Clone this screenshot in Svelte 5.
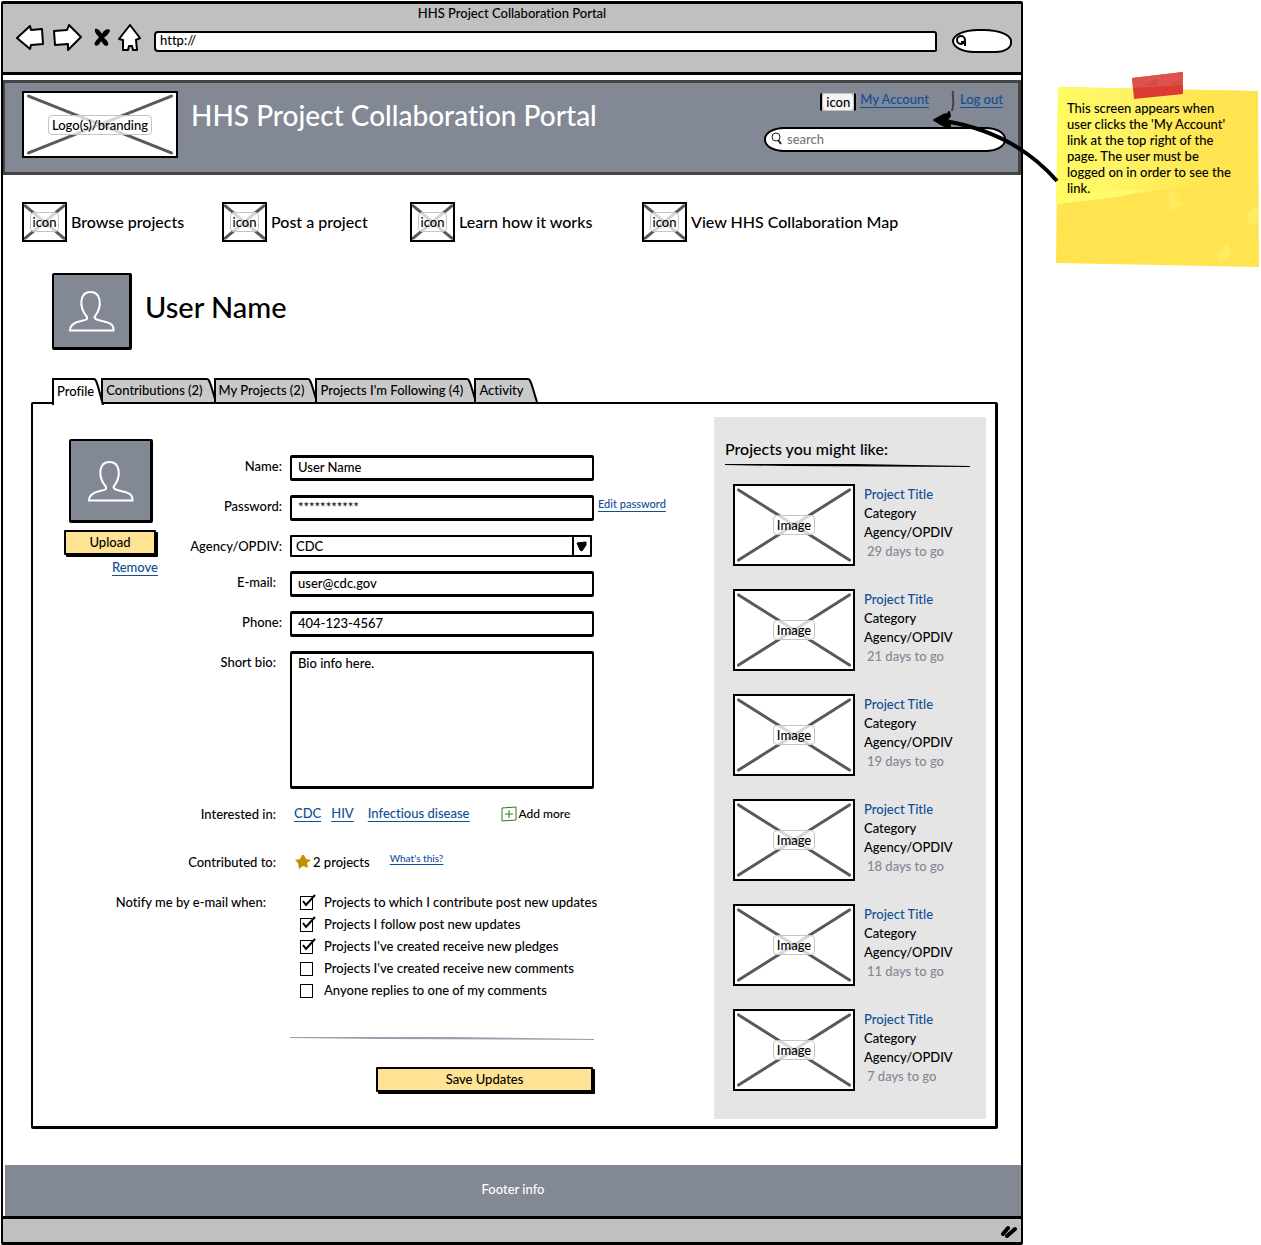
<script>
  const navItems = ['Browse projects', 'Post a project', 'Learn how it works', 'View HHS Collaboration Map'];
  const tabs = ['Profile', 'Contributions (2)', 'My Projects (2)', "Projects I'm Following (4)", 'Activity'];
  const projects = [29, 21, 19, 18, 11, 7];
  let active = $state(0);
  let notices = $state([
    { text: 'Projects to which I contribute post new updates', on: true },
    { text: 'Projects I follow post new updates', on: true },
    { text: "Projects I've created receive new pledges", on: true },
    { text: "Projects I've created receive new comments", on: false },
    { text: 'Anyone replies to one of my comments', on: false }
  ]);
</script>

{#snippet placeholder(label, kind)}
  <span class="placeholder {kind}">
    <svg class="cross" viewBox="0 0 100 100" preserveAspectRatio="none" aria-hidden="true">
      <path d="M3 5 L97 95 M3 95 L97 5" />
    </svg>
    <span class="badge">{label}</span>
  </span>
{/snippet}

{#snippet avatar()}
  <svg class="person" viewBox="0 0 48 42" aria-hidden="true">
    <path d="M19 27 C10 16 12 2 22.500 2 C33 2 35 16 26.500 27 C27 30 30 30 34 31 C41 32.500 46 34 45.500 40.500 L2 40.500 C2 34 8 32 13 31 C17 30 20 30 19 27 Z" />
  </svg>
{/snippet}

<div class="page">
  <div class="window">
    <header class="chrome">
      <div class="window-title">HHS Project Collaboration Portal</div>
      <div class="toolbar">
        <button class="tool" aria-label="Back">
          <svg width="28" height="26" viewBox="0 0 28 26"><path class="outline" d="M1 13 L14 1 L15 5 L26 4 L27 19 L15 20 L14 24 Z" /></svg>
        </button>
        <button class="tool" aria-label="Forward">
          <svg width="30" height="28" viewBox="0 0 30 28"><path class="outline" d="M29 13 L17 1 L15 6 L2 7 L3 21 L16 20 L16 26 Z" /></svg>
        </button>
        <button class="tool stop" aria-label="Stop">
          <svg width="18" height="20" viewBox="0 0 18 20"><path d="M2 1 C5 0 7 3 9 6 C10 3 14 0 17 2 C17 5 13 8 11 10 C14 12 16 15 15 17 C13 20 10 16 8 13 C7 16 4 19 2 17 C0 15 4 12 6 9 C4 7 1 4 2 1 Z" /></svg>
        </button>
        <button class="tool" aria-label="Home">
          <svg width="24" height="28" viewBox="0 0 24 28"><path class="outline" d="M12 1 L22 14 L18 16 L19 26 L15 26 L14 22 L11 22 L10 26 L5 26 L5 16 L1 15 Z" /></svg>
        </button>
        <input class="address" aria-label="Address" value="http://" />
        <div class="mini-search">
          <svg width="14" height="14" viewBox="0 0 14 14" aria-hidden="true"><circle cx="6" cy="6" r="4" /><path d="M6 8 L10 8 L10 12" /></svg>
          <input aria-label="Web search" />
        </div>
      </div>
    </header>

    <div class="banner">
      {@render placeholder('Logo(s)/branding', 'logo')}
      <h1>HHS Project Collaboration Portal</h1>
      <div class="account">
        <div class="account-links">
          <span class="tiny-icon"><span>icon</span></span>
          <a class="mine" href="#account">My Account</a>
          <svg class="rule" width="4" height="20" viewBox="0 0 4 20" aria-hidden="true"><path d="M2 0 C1 8 4 10 1 20" /></svg>
          <a href="#logout">Log out</a>
        </div>
        <div class="search">
          <svg width="12" height="14" viewBox="0 0 12 14" aria-hidden="true"><circle cx="5" cy="5" r="4" /><path d="M7 8 L10 12" stroke-width="2" /></svg>
          <input aria-label="Search" placeholder="search" />
        </div>
      </div>
    </div>

    <nav>
      {#each navItems as item}
        <a href="#nav">{@render placeholder('icon', 'small')}<span>{item}</span></a>
      {/each}
    </nav>

    <section class="user">
      <div class="avatar">{@render avatar()}</div>
      <h2>User Name</h2>
    </section>

    <main>
      <div class="tabs" role="tablist">
        {#each tabs as tab, i}
          <button role="tab" class="tab" class:active={active === i} aria-selected={active === i} onclick={() => (active = i)}>
            <span>{tab}</span>
            <svg width="10" height="27" viewBox="0 0 10 27" preserveAspectRatio="none" aria-hidden="true">
              <path class="fill" d="M0 0 C3 1 4 10 9 27 L0 27 Z" />
              <path class="edge" d="M0 1 C3 1 4 10 9 27" />
            </svg>
          </button>
        {/each}
      </div>

      <div class="panel">
        <div class="profile">
          <div class="photo">
            <div class="avatar big">{@render avatar()}</div>
            <button class="gold">Upload</button>
            <a href="#remove">Remove</a>
          </div>

          <form onsubmit={(e) => e.preventDefault()}>
            <div class="row">
              <label for="name">Name:</label>
              <input id="name" value="User Name" />
            </div>
            <div class="row">
              <label for="password">Password:</label>
              <div class="beside">
                <input id="password" value="***********" />
                <a class="edit" href="#password">Edit password</a>
              </div>
            </div>
            <div class="row">
              <label for="agency">Agency/OPDIV:</label>
              <div class="select">
                <select id="agency"><option>CDC</option></select>
                <svg width="18" height="18" viewBox="0 0 18 18" aria-hidden="true"><path d="M1 0 L1 18" stroke="#000" stroke-width="2" /><path d="M5 6 L14 5 L14 8 L10 14 L8 13 Z" stroke="#000" stroke-linejoin="round" /></svg>
              </div>
            </div>
            <div class="row inset">
              <label for="email">E-mail:</label>
              <input id="email" value="user@cdc.gov" />
            </div>
            <div class="row">
              <label for="phone">Phone:</label>
              <input id="phone" value="404-123-4567" />
            </div>
            <div class="row inset">
              <label for="bio">Short bio:</label>
              <textarea id="bio">Bio info here.</textarea>
            </div>
            <div class="row inset line">
              <span class="label">Interested in:</span>
              <div class="interests">
                <a href="#cdc">CDC</a>
                <a href="#hiv">HIV</a>
                <a class="wide" href="#disease">Infectious disease</a>
                <button class="add" type="button">
                  <svg width="16" height="16" viewBox="0 0 16 16" aria-hidden="true"><path d="M1 2 L15 1 L15 14 L1 15 Z M8 4 L8 12 M4 8 L12 8" /></svg>
                  Add more
                </button>
              </div>
            </div>
            <div class="row inset">
              <span class="label">Contributed to:</span>
              <div class="contributed">
                <svg width="16" height="14" viewBox="0 0 16 14" aria-hidden="true"><path d="M7 0 L9 0 L11 4 L16 5 L12 8 L13 13 L8 11 L4 14 L3 8 L0 5 L5 4 Z" /></svg>
                <span>2 projects</span>
                <a href="#help">What's this?</a>
              </div>
            </div>
            <div class="row notify">
              <span class="label">Notify me by e-mail when:</span>
              <div class="checks">
                {#each notices as notice}
                  <label class="check">
                    <span class="box">
                      <input type="checkbox" bind:checked={notice.on} />
                      <svg width="16" height="16" viewBox="0 0 16 16" aria-hidden="true"><path d="M3 7 L6 11 L15 1" /></svg>
                    </span>
                    {notice.text}
                  </label>
                {/each}
              </div>
            </div>
            <div class="row finish">
              <div class="actions">
                <svg class="divider" viewBox="0 0 304 3" preserveAspectRatio="none" aria-hidden="true"><path d="M0 0 L160 0 L304 2 L304 3 L90 2 L0 1 Z" /></svg>
                <button class="gold">Save Updates</button>
              </div>
            </div>
          </form>
        </div>

        <aside class="suggestions">
          <h3>Projects you might like:</h3>
          <svg class="underline" viewBox="0 0 244 3" preserveAspectRatio="none" aria-hidden="true"><path d="M0 0 L130 0 L244 2 L244 3 L60 2 L0 1 Z" /></svg>
          <ul>
            {#each projects as days}
              <li>
                {@render placeholder('Image', 'image')}
                <div class="facts">
                  <a href="#project">Project Title</a>
                  <span>Category</span>
                  <span>Agency/OPDIV</span>
                  <span class="days">{days} days to go</span>
                </div>
              </li>
            {/each}
          </ul>
        </aside>
      </div>
    </main>

    <footer>Footer info</footer>
    <div class="status">
      <svg width="18" height="14" viewBox="0 0 18 14" aria-hidden="true"><path d="M3 10 L8 4 M7 12 L15 5" /></svg>
    </div>
  </div>

  <aside class="sticky">
    <svg class="arrow" width="126" height="74" viewBox="0 0 126 74" aria-hidden="true">
      <path d="M12 12 C60 20 96 40 124 72" fill="none" stroke="#000" stroke-width="4" />
      <path d="M1 11 L10 6 L15 5 L16 3 L17 7 L14 10 L17 14 L17 18 L12 17 L6 14 Z" stroke="#000" stroke-width="2" stroke-linejoin="round" />
    </svg>
    <svg class="paper" viewBox="0 0 203 180" preserveAspectRatio="none" aria-hidden="true">
      <defs>
        <linearGradient id="sheen" x1="0" y1="0" x2="1" y2="0">
          <stop offset="0" stop-color="#fffb62" />
          <stop offset="0.3" stop-color="#fff566" />
          <stop offset="0.8" stop-color="#ffe450" />
        </linearGradient>
      </defs>
      <path d="M2 0 L202 4 L203 180 L0 176 Z" fill="#ffe450" />
      <path d="M2 0 L190 4 L180 96 L96 104 L54 111 L0 117 Z" fill="url(#sheen)" />
      <path d="M2 114 L40 104 L92 103 L60 110 L0 117 Z" fill="#fffb6c" />
      <path d="M112 104 L124 106 L118 112 L128 116 L114 124 Z M160 166 L172 156 L176 168 L164 176 Z M190 126 L202 118 L202 134 L194 140 Z" fill="#ffea60" />
    </svg>
    <svg class="tape" width="52" height="28" viewBox="0 0 52 28" aria-hidden="true">
      <path d="M0 6 L51 0 L51 22 L2 27 Z" fill="#dc3a33" />
      <path d="M0 6 L51 0 L51 13 L1 16 Z" fill="#de524c" />
      <path d="M12 14 L26 6 L24 13 Z M38 12 L50 8 L48 13 Z" fill="#d44b44" />
    </svg>
    <p>This screen appears when user clicks the 'My Account' link at the top right of the page. The user must be logged on in order to see the link.</p>
  </aside>
</div>

<style>
  :global(body) { margin: 0; background: #fff; }
  .page {
    display: flex;
    align-items: flex-start;
    gap: 33px;
    padding: 1px 2px 1px 1px;
    font: 500 13px/18px Lato, "Open Sans", sans-serif;
    font-variant-ligatures: none;
    color: #000;
  }
  .page * { box-sizing: border-box; }
  input, button, select, textarea { font: inherit; color: inherit; margin: 0; border-radius: 0; }
  button { background: none; border: 0; padding: 0; cursor: pointer; }
  a { color: #0f4f96; text-underline-offset: 3px; }
  h1, h2, h3, p, ul { margin: 0; padding: 0; font-weight: 500; }
  svg { display: block; flex: none; }

  .window { flex: 1; min-width: 0; border: 3px solid #000; border-width: 3px 2px 3px 2px; border-radius: 2px; }

  .chrome { background: #c0c0c0; border-bottom: 3px solid #000; height: 71px; }
  .window-title { text-align: center; line-height: 18px; }
  .toolbar { display: flex; align-items: center; padding: 0 9px 0 13px; height: 32px; }
  .tool { margin-right: 8px; }
  .stop { margin: 0 7px 0 3px; }
  .outline { fill: #fff; stroke: #000; stroke-width: 2; stroke-linejoin: round; }
  .address {
    flex: 1; min-width: 0; height: 21px; margin: 6px 15px 0 4px; padding: 0 4px 2px;
    border: 2px solid #000; border-radius: 4px 3px 2px 4px; background: #fff;
  }
  .mini-search {
    display: flex; align-items: center; width: 60px; height: 24px; margin-top: 6px; padding: 0 1px;
    border: 2px solid #000; border-radius: 26px 28px 16px 22px / 12px 12px 10px 12px; background: #fff;
  }
  .mini-search svg { fill: none; stroke: #000; stroke-width: 2; }
  .mini-search input { width: 36px; border: 0; background: none; padding: 0; }

  .banner {
    display: flex; align-items: flex-start; margin-top: 5px; padding: 8px 12px 0 17px; height: 95px;
    background: #828894; border: 3px solid #444; border-width: 3px 3px 3px 2px;
  }
  .banner h1 { color: #fff; font-size: 28px; line-height: 34px; margin: 7px 0 0 13px; white-space: nowrap; }
  .account { margin-left: auto; width: 242px; }
  .account-links { display: flex; justify-content: flex-end; align-items: flex-start; padding-right: 3px; height: 36px; }
  .account-links a { line-height: 16px; }
  .tiny-icon {
    width: 36px; height: 18px; margin: 2px 4px 0 0; text-align: center; line-height: 16px; background: #bbb;
    border: 2px solid #000; border-width: 0 2px; border-radius: 2px;
  }
  .tiny-icon span { display: block; height: 18px; background: #f4f4f4; border: 1px solid #c4c4c4; border-radius: 4px; }
  .account-links .mine { margin-right: 22px; }
  .rule { margin-right: 5px; fill: none; stroke: #444; stroke-width: 2; }
  .search {
    display: flex; align-items: center; gap: 4px; height: 25px; padding: 0 6px 1px 5px;
    background: #fff; border: 2px solid #000; border-radius: 20px / 12px;
  }
  .search svg { fill: none; stroke: #222; }
  .search input { flex: 1; min-width: 0; border: 0; padding: 0; background: none; }
  .search input::placeholder { color: #777; opacity: 1; }

  .placeholder { position: relative; display: flex; flex: none; align-items: center; justify-content: center; background: #fff; border: 2px solid #000; }
  .cross { position: absolute; inset: 0; width: 100%; height: 100%; }
  .cross path { fill: none; stroke: #595959; stroke-width: 3; vector-effect: non-scaling-stroke; stroke-linecap: round; }
  .badge { position: relative; padding: 0 3px; color: #000; background: rgba(255, 255, 255, 0.75); border: 1px solid #c4c4c4; border-radius: 4px; }
  .logo { width: 156px; height: 67px; }
  .small { width: 45px; height: 40px; }
  .small .badge { padding: 0 2px; }
  .image { width: 122px; height: 82px; }

  nav { display: grid; grid-template-columns: 200px 188px 232px 1fr; padding: 27px 18px 0 19px; }
  nav a { display: flex; align-items: center; gap: 4px; color: #000; text-decoration: none; }
  nav a > span:last-child { font-size: 16px; line-height: 22px; white-space: nowrap; }

  .user { display: flex; align-items: center; gap: 13px; padding: 31px 49px 0; }
  .user h2 { font-size: 29px; line-height: 34px; padding-bottom: 10px; }
  .avatar {
    display: flex; align-items: center; justify-content: center; width: 80px; height: 77px;
    background: #828894; border: 3px solid #000; border-width: 2px 3px 3px 2px; border-radius: 2px;
  }
  .avatar.big { width: 84px; height: 84px; }
  .person { width: 48px; height: 42px; fill: none; stroke: #fff; stroke-width: 2; }

  main { padding: 28px 23px 36px 28px; }
  .tabs { display: flex; align-items: flex-start; padding-left: 21px; height: 24px; }
  .tab { display: flex; position: relative; margin-right: -3px; height: 24px; }
  .tab span { height: 24px; padding: 0 4px 0 3px; line-height: 20px; background: #c9c9c9; border: 2px solid #000; border-width: 2px 0 0 2px; white-space: nowrap; }
  .tab svg { height: 24px; }
  .tab .fill { fill: #c9c9c9; }
  .tab .edge { fill: none; stroke: #000; stroke-width: 2; }
  .tab.active { z-index: 1; height: 27px; }
  .tab.active span { height: 27px; padding-right: 0; line-height: 22px; background: #fff; }
  .tab.active svg { height: 27px; }
  .tab.active .fill { fill: #fff; }

  .panel { display: flex; justify-content: space-between; align-items: flex-start; border: 3px solid #000; border-width: 2px 3px 3px 2px; border-radius: 2px; padding: 13px 9px 7px 0; }
  .profile { display: grid; flex: 1; min-width: 0; }
  .photo { grid-area: 1 / 1; justify-self: start; align-self: start; z-index: 1; display: grid; justify-items: start; margin: 22px 0 0 31px; width: 94px; }
  .photo .avatar { margin-left: 5px; }
  .photo .gold { width: 92px; margin-top: 7px; }
  .photo a { justify-self: end; line-height: 20px; }
  .gold { height: 25px; line-height: 21px; margin-bottom: 2px; background: #ffe294; border: 2px solid #000; border-radius: 1px; box-shadow: 2px 2px 0 #000; }

  form { grid-area: 1 / 1; display: flex; flex-direction: column; gap: 14px; padding-top: 38px; }
  .row { display: grid; grid-template-columns: 249px 304px; column-gap: 8px; }
  .row > label, .label { justify-self: end; line-height: 22px; white-space: nowrap; }
  .inset > label, .inset > .label { padding-right: 6px; }
  .row > input, .beside input, textarea { width: 304px; padding: 0 6px; background: #fff; border: 3px solid #000; border-width: 3px 2px 3px 2px; border-radius: 2px; }
  .row > input, .beside input { height: 26px; padding-bottom: 2px; }
  .beside { display: flex; gap: 4px; }
  .beside input { flex: none; }
  .edit { font-size: 11px; line-height: 18px; white-space: nowrap; }
  .select { display: grid; width: 302px; border: 2px solid #000; border-radius: 1px; }
  select { grid-area: 1 / 1; height: 18px; padding: 0 4px; border: 0; background: #fff; appearance: none; }
  .select svg { grid-area: 1 / 1; justify-self: end; pointer-events: none; }
  textarea { display: block; height: 138px; resize: none; }
  .line { min-height: 34px; }
  .interests, .contributed { display: flex; align-items: flex-start; padding: 0 4px; white-space: nowrap; }
  .interests a { margin-right: 10px; line-height: 20px; }
  .interests .wide { margin: 0 32px 0 4px; }
  .add { display: flex; align-items: center; gap: 1px; height: 22px; font-size: 12px; }
  .add path { fill: none; stroke: #2c7a1a; stroke-width: 1; }
  .contributed svg { margin: 4px 2px 0 1px; fill: #bf9000; }
  .contributed span { line-height: 22px; margin-right: 20px; }
  .contributed a { font-size: 10px; line-height: 14px; text-underline-offset: 2px; }
  .notify { margin-top: 4px; }
  .notify .label { padding-right: 16px; }
  .checks { display: grid; padding-left: 10px; }
  .check { display: flex; align-items: center; gap: 8px; line-height: 22px; white-space: nowrap; }
  .box { display: grid; width: 16px; height: 16px; }
  .box input { grid-area: 1 / 1; align-self: end; appearance: none; width: 13px; height: 14px; border: 1px solid #000; background: #fff; }
  .box svg { grid-area: 1 / 1; z-index: 1; pointer-events: none; visibility: hidden; }
  .box input:checked + svg { visibility: visible; }
  .box path { fill: none; stroke: #000; stroke-width: 2; }
  .actions { grid-column: 2; display: grid; gap: 27px; padding-top: 22px; }
  .divider { width: 304px; height: 3px; fill: #9a9fae; }
  .actions .gold { justify-self: end; width: 217px; margin-right: 1px; }

  .suggestions { flex: none; width: 272px; padding: 20px 16px 28px 11px; background: #e5e5e5; }
  .suggestions h3 { font-size: 16px; line-height: 24px; }
  .underline { width: 100%; height: 3px; margin-top: 3px; }
  .suggestions ul { display: grid; gap: 23px; list-style: none; padding: 17px 0 0 8px; }
  .suggestions li { display: flex; gap: 9px; }
  .facts { display: grid; align-content: start; padding-top: 1px; }
  .facts > * { line-height: 19px; white-space: nowrap; }
  .facts a { text-decoration: none; }
  .days { padding-left: 3px; color: #828894; }

  footer { margin-left: 2px; background: #828894; color: #fff; text-align: center; line-height: 48px; padding-bottom: 3px; }
  .status { display: flex; justify-content: flex-end; align-items: center; height: 26px; padding-right: 3px; background: #c0c0c0; border-top: 3px solid #000; }
  .status path { fill: none; stroke: #000; stroke-width: 4; stroke-linecap: round; }

  .sticky { position: relative; flex: none; width: 203px; min-height: 180px; margin-top: 86px; }
  .paper { position: absolute; inset: 0; width: 100%; height: 100%; }
  .tape { position: absolute; left: 76px; top: -15px; }
  .arrow { position: absolute; right: 200px; top: 22px; z-index: 2; }
  .sticky p { position: relative; padding: 13px 19px 0 11px; line-height: 16px; }
</style>
